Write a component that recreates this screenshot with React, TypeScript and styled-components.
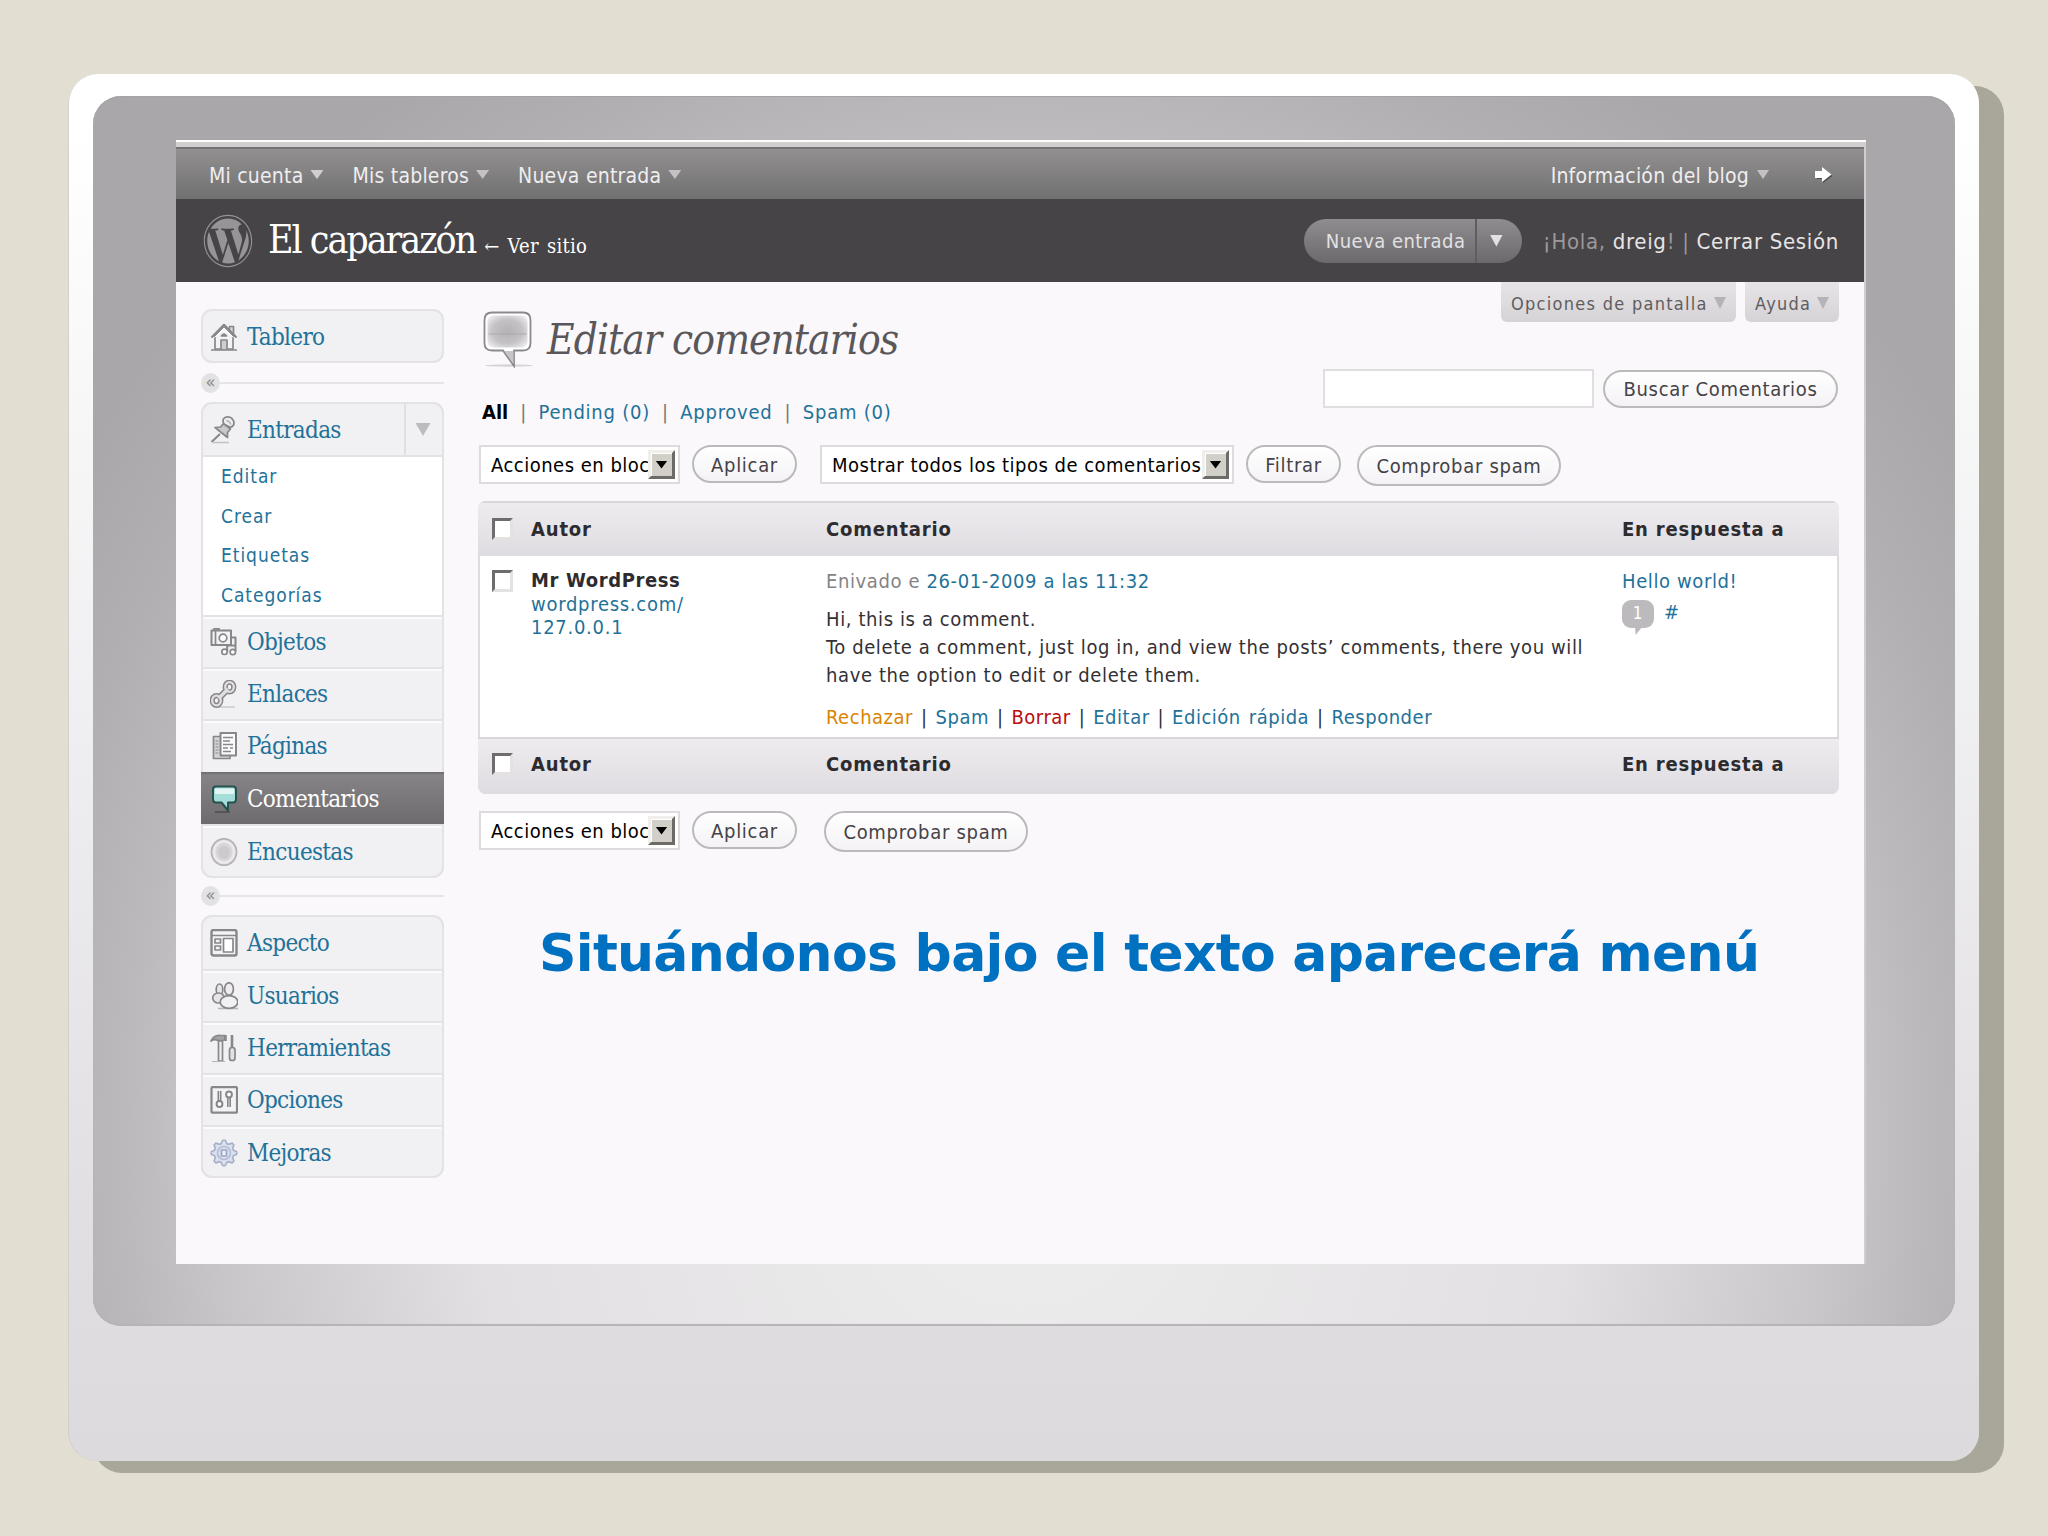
import React from "react";
import styled, { createGlobalStyle, css } from "styled-components";
import { FaWordpress } from "react-icons/fa";

const sans = `"DejaVu Sans Condensed", "DejaVu Sans", sans-serif`;
const serif = `"DejaVu Serif Condensed", "DejaVu Serif", serif`;
const link = "#1f7299";

const GlobalStyle = createGlobalStyle`
  * { box-sizing: border-box; }
  body { margin: 0; background: #e2dfd2; font-family: ${sans}; font-size: 20px; color: #333135; }
`;

/* ---------- frame ---------- */

const Slide = styled.div`
  width: 2048px;
  height: 1536px;
  padding: 74px 0 0 68px;
  overflow: hidden;
  background: #e2dfd2;
`;

const Monitor = styled.div`
  width: 1911px;
  height: 1387px;
  padding: 22px 24px 0 25px;
  border-radius: 29px;
  background: linear-gradient(#ffffff 0%, #ffffff 4%, #f0eff1 45%, #e0dee1 85%, #dcdadd 100%);
  box-shadow: 25px 12px 0 #a9a799, inset 1px 0 0 #d3cfcc;
`;

const Bezel = styled.div`
  height: 1230px;
  padding: 44px 89px 0 83px;
  border-radius: 28px;
  background: radial-gradient(ellipse 1000px 1130px at 50% 85%, #efeeef 0%, #e2e0e2 55%, #c9c7ca 80%, #bbb9bc 90%, #b1afb2 100%, #a9a7aa 112%);
  box-shadow: inset 0 -2px 1px #b5b3b6, inset 0 1px 0 #a5a3a6;
`;

const Screen = styled.div`
  width: 1690px;
  height: 1124px;
`;

const Edge = styled.div`
  height: 7px;
  background: #d2cfce;
  border-top: 2px solid #fff;
`;

const Page = styled.div`
  width: 1688px;
  height: 1117px;
  background: #faf8fb;
  box-shadow: 2px 0 0 #cfcdd0;
`;

/* ---------- top bars ---------- */

const TopBar = styled.nav`
  display: flex;
  align-items: center;
  height: 52px;
  padding: 3px 31px 0 33px;
  border-top: 2px solid #757375;
  background: linear-gradient(#929091, #717071);
  color: #efeeef;
  font-size: 21px;
  letter-spacing: 0.22px;
`;

const TopItem = styled.span<{ $push?: boolean }>`
  display: flex;
  align-items: center;
  gap: 7px;
  margin-right: 29px;
  i { margin-top: -2px; }
  ${(p) => p.$push && css`gap: 8px; margin-left: auto; margin-right: 46px;`}
`;

const Caret = styled.i<{ $w: number; $h: number; $c: string }>`
  display: block;
  flex: none;
  width: ${(p) => p.$w}px;
  height: ${(p) => p.$h}px;
  background: ${(p) => p.$c};
  clip-path: polygon(0 0, 100% 0, 50% 100%);
`;

const PillCaret = styled(Caret)`
  margin-left: 13px;
`;

const Header = styled.header`
  display: flex;
  align-items: center;
  height: 83px;
  padding: 0 25px 0 27px;
  background: #464446;
`;

const Logo = styled(FaWordpress)`
  flex: none;
  width: 50px;
  height: 54px;
  color: #969496;
`;

const SiteTitle = styled.h1`
  margin: 4px 0 0 15px;
  font: 39px/79px ${serif};
  letter-spacing: -2.05px;
  color: #fff;
  white-space: nowrap;
`;

const ViewSite = styled.span`
  margin-left: 9px;
  font-size: 20px;
  letter-spacing: 0.3px;
  word-spacing: 2px;
`;

const Pill = styled.div`
  display: flex;
  align-items: center;
  width: 218px;
  height: 44px;
  margin: 0 21px 0 auto;
  border-radius: 22px;
  background: linear-gradient(#8f8d8f, #6b696c);
  color: #e3e1e3;
  font-size: 20px;
  letter-spacing: 0.45px;
`;

const PillLabel = styled.span`
  width: 173px;
  height: 44px;
  padding-left: 22px;
  line-height: 44px;
  border-right: 2px solid #5f5d60;
`;

const Greeting = styled.span`
  padding-top: 2px;
  color: #9b999b;
  font-size: 22px;
  letter-spacing: 0.68px;
  white-space: nowrap;
  b { font-weight: normal; color: #e6e4e6; }
`;

/* ---------- sidebar ---------- */

const Body = styled.div`
  display: flex;
  padding-left: 25px;
`;

const Sidebar = styled.aside`
  width: 243px;
  padding-top: 27px;
`;

const Group = styled.ul`
  margin: 0;
  padding: 0;
  overflow: hidden;
  list-style: none;
  border-radius: 11px;
  background: #f1f0f2;
  box-shadow: inset 0 0 0 2px #e3e2e4;
`;

const Item = styled.li<{ $h: number; $active?: boolean; $first?: boolean }>`
  display: flex;
  align-items: center;
  height: ${(p) => p.$h}px;
  padding: 2px 0 0 9px;
  font: 24px ${serif};
  letter-spacing: -0.7px;
  color: ${link};
  ${(p) => !p.$first && !p.$active && css`
    border: 2px solid #e3e2e4;
    border-bottom: 0;
    box-shadow: inset 0 2px 0 #fbfafc;
    padding: 0 0 0 7px;
  `}
  ${(p) => p.$active && css`
    color: #fff;
    background: linear-gradient(#6c6a6d, #858386 6%, #6d6b6e);
  `}
`;

const IconCell = styled.span`
  display: flex;
  width: 37px;
  flex: none;
`;

const Toggle = styled.span`
  display: flex;
  align-items: center;
  justify-content: center;
  width: 40px;
  height: 100%;
  margin-left: auto;
  padding-right: 4px;
  border-left: 2px solid #e0dfe1;
`;

const SubMenu = styled.li`
  height: 160px;
  margin: 0 2px;
  padding-left: 18px;
  border-top: 2px solid #e3e2e4;
  background: #fff;
  color: ${link};
  font-size: 19px;
  letter-spacing: 0.95px;
  line-height: 38px;
  div { height: 39.7px; }
`;

const Divider = styled.div<{ $h: number }>`
  display: flex;
  align-items: center;
  height: ${(p) => p.$h}px;
  &::after { content: ""; flex: 1; height: 2px; background: #e5e4e6; }
`;

const Dot = styled.span`
  width: 19px;
  height: 20px;
  border-radius: 50%;
  background: #e2e1e3;
  color: #8d8b8e;
  font-size: 18px;
  line-height: 17px;
  text-align: center;
`;

/* ---------- main ---------- */

const Main = styled.main`
  width: 1361px;
  margin-left: 34px;
`;

const Intro = styled.div`
  display: flex;
  justify-content: space-between;
  height: 163px;
`;

const TitleRow = styled.div`
  display: flex;
  align-items: center;
  height: 57px;
  margin: 29px 0 0 5px;
`;

const Title = styled.h2`
  margin: 0 0 0 14px;
  font: italic 42px/57px ${serif};
  letter-spacing: -0.93px;
  color: #59575a;
  white-space: nowrap;
`;

const Filters = styled.div`
  margin: 32px 0 0 4px;
  line-height: 24px;
  letter-spacing: 0.75px;
  color: ${link};
  b { color: #000; letter-spacing: 0; }
  i { font-style: normal; color: #777; margin: 0 11.5px 0 12px; }
`;

const Side = styled.div`
  display: flex;
  flex-direction: column;
  align-items: flex-end;
`;

const Tabs = styled.div`
  display: flex;
  gap: 9px;
`;

const Tab = styled.div<{ $w: number }>`
  display: flex;
  align-items: center;
  justify-content: space-between;
  width: ${(p) => p.$w}px;
  height: 40px;
  padding: 2px 10px 0 10px;
  border-radius: 0 0 6px 6px;
  background: linear-gradient(#e6e4e7, #d5d3d6);
  color: #5f5d60;
  font-size: 18px;
  letter-spacing: 1.28px;
  white-space: nowrap;
`;

const Search = styled.div`
  display: flex;
  align-items: center;
  gap: 9px;
  margin: 47px 1px 0 0;
`;

const SearchField = styled.div`
  width: 271px;
  height: 39px;
  border: 2px solid #e0dee1;
  background: #fff;
`;

const Button = styled.div<{ $w: number; $h?: number; $ml?: number }>`
  display: flex;
  flex: none;
  align-items: center;
  justify-content: center;
  width: ${(p) => p.$w}px;
  height: ${(p) => p.$h ?? 38}px;
  margin-left: ${(p) => p.$ml ?? 0}px;
  padding-top: 1px;
  border: 2px solid #bbb9bc;
  border-radius: 22px;
  background: linear-gradient(#ffffff, #f4f2f5);
  color: #454347;
  letter-spacing: 0.7px;
  white-space: nowrap;
`;

const Toolbar = styled.div`
  display: flex;
  align-items: flex-start;
  padding-left: 1px;
`;

const SelectBox = styled.div<{ $w: number; $ml?: number }>`
  display: flex;
  flex: none;
  align-items: center;
  width: ${(p) => p.$w}px;
  height: 39px;
  margin-left: ${(p) => p.$ml ?? 0}px;
  padding: 0 3px 0 10px;
  border: 2px solid #dddbde;
  background: #fff;
  color: #000;
  letter-spacing: 0.49px;
`;

const SelectText = styled.span`
  flex: 1;
  width: 0;
  white-space: nowrap;
`;

const SelectArrow = styled.span`
  display: flex;
  flex: none;
  align-items: center;
  justify-content: center;
  position: relative;
  width: 27px;
  height: 29px;
  border: 3px solid;
  border-color: #f0efec #6d6b68 #6d6b68 #f0efec;
  background: #d2cfc8;
  box-shadow: inset 1px 1px 0 #fff;
`;

const Table = styled.section`
  margin: 15px 0 17px;
  border-radius: 8px;
  overflow: hidden;
  background: #fff;
  box-shadow: inset 0 0 0 2px #dddbde;
`;

const columns = css`
  display: grid;
  grid-template-columns: 53px 295px 796px 1fr;
`;

const Band = styled.div<{ $h: number; $foot?: boolean }>`
  ${columns}
  align-items: center;
  height: ${(p) => p.$h}px;
  padding: ${(p) => (p.$foot ? "0 0 6px" : "0 0 2px")};
  background: linear-gradient(#eeecef, #dedce0);
  border-top: 2px solid #d8d6d9;
  color: #2d2b2e;
  font-weight: bold;
  letter-spacing: 0.82px;
`;

const Record = styled.div`
  ${columns}
  height: 181px;
  padding-top: 13px;
  line-height: 24px;
  letter-spacing: 0.61px;
`;

const Check = styled.span`
  display: block;
  width: 21px;
  height: 22px;
  margin: 1px 0 0 14px;
  border: 3px solid;
  border-color: #6e6c6f #e4e2e0 #e4e2e0 #6e6c6f;
  background: #fff;
`;

const Author = styled.div`
  color: ${link};
  line-height: 23.7px;
  letter-spacing: 0.72px;
  b { color: #2d2b2e; letter-spacing: 0.62px; }
`;

const Muted = styled.span`color: #858386;`;
const Link = styled.span<{ $c?: string }>`color: ${(p) => p.$c ?? link};`;

const Quote = styled.p`
  margin: 12px 0 16px;
  line-height: 28px;
  white-space: nowrap;
`;

const Actions = styled.div`
  letter-spacing: 0.52px;
  word-spacing: 1.7px;
`;

const CountRow = styled.div`
  display: flex;
  gap: 10px;
  margin-top: 7px;
`;

const Count = styled.span`
  position: relative;
  width: 32px;
  height: 28px;
  border-radius: 9px;
  background: #bcbabd;
  color: #fff;
  font-size: 17px;
  line-height: 27px;
  text-align: center;
  &::after {
    content: "";
    position: absolute;
    left: 13px;
    top: 27px;
    width: 7px;
    height: 8px;
    background: #bcbabd;
    clip-path: polygon(0 0, 100% 0, 10% 100%);
  }
`;

const Caption = styled.p`
  margin: 70px 0 0 61px;
  font: bold 52px/62px "DejaVu Sans", sans-serif;
  letter-spacing: -0.7px;
  color: #0070c0;
  white-space: nowrap;
`;

/* ---------- icons ---------- */

const ink = "#88868a";

const Glyph = ({ children, stroke = ink }: { children: React.ReactNode; stroke?: string }) => (
  <svg width="28" height="28" viewBox="0 0 28 28" fill="none" stroke={stroke} strokeWidth="1.7" strokeLinejoin="round">
    {children}
  </svg>
);

const gearPath = (() => {
  const pts: string[] = [];
  for (let i = 0; i < 32; i++) {
    const a = ((i - 0.5) / 32) * Math.PI * 2;
    const r = i % 4 < 2 ? 12.8 : 9.8;
    pts.push(`${(14 + r * Math.cos(a)).toFixed(2)} ${(14 + r * Math.sin(a)).toFixed(2)}`);
  }
  return `M${pts.join("L")}Z`;
})();

const icons: Record<string, React.ReactNode> = {
  home: (
    <Glyph>
      <path d="M5 13v13h18V13L14 4z" fill="#f4f3f4" />
      <path d="M19.5 7V3.5h4V11" fill="#dddbdd" />
      <path d="M1.5 14.5 14 1.8l12.5 12.7" strokeWidth="2.2" />
      <path d="M4.5 14.5 14 5l9.5 9.5" stroke="#fff" strokeWidth="1" />
      <path d="M11 26v-9h6v9" fill="#cfcdd0" />
      <path d="M11.5 13q2.5-4 5 0z" fill={ink} />
      <path d="M1 27h26" />
    </Glyph>
  ),
  pin: (
    <Glyph>
      <path d="M10 18 1.500 26" strokeWidth="2" />
      <path d="M2 26.500h17" stroke="#c4c2c5" />
      <path d="M13.500 7.500 20.500 13 17.500 16.500 17.500 21.500 5 11.500 10.500 11z" fill="#c9c7ca" />
      <path d="M14 8q-2.500-4.500 1-6.500 4-1.500 7 1 3 3.500 1.500 6.500-1.500 2.500-4 2z" fill="#ecebed" />
      <path d="M16.500 4.500q3 .5 4.500 4" stroke="#b0aeb1" strokeWidth="1.300" />
    </Glyph>
  ),
  media: (
    <Glyph>
      <rect x="1.5" y="2.500" width="19.500" height="14.500" fill="#f2f1f3" strokeWidth="2" />
      <path d="M4 2V.8h5V2M5.500 3v13" />
      <circle cx="13" cy="10" r="3.800" fill="#fff" />
      <path d="M17.200 23.500V17M25.500 23.500V9.500H22M17.500 17.500h8" strokeWidth="2" />
      <circle cx="14.500" cy="23.800" r="2.700" fill="#fff" />
      <circle cx="22.800" cy="24" r="2.700" fill="#fff" />
    </Glyph>
  ),
  link: (
    <Glyph>
      <path d="M8 27h17" stroke="#d0ced1" />
      <ellipse cx="6.500" cy="20.500" rx="4.300" ry="4.800" strokeWidth="5.200" />
      <ellipse cx="19.500" cy="7" rx="4.300" ry="4.800" strokeWidth="5.200" />
      <path d="M9 18 17.500 9.500" strokeWidth="6.500" />
      <ellipse cx="6.500" cy="20.500" rx="4.300" ry="4.800" stroke="#e0dee1" strokeWidth="2.300" />
      <ellipse cx="19.500" cy="7" rx="4.300" ry="4.800" stroke="#e0dee1" strokeWidth="2.300" />
      <path d="M8.500 18.500 18 9" stroke="#e0dee1" strokeWidth="3.200" />
    </Glyph>
  ),
  pages: (
    <Glyph>
      <path d="M10 4.500H3.500v22H20V24" fill="#d6d4d7" />
      <path d="M5.500 9h3M5.500 12h3M5.500 15h3M5.500 18h3M5.500 21h3" strokeWidth="1.200" />
      <rect x="10.500" y="1" width="15.500" height="22.500" fill="#fafafa" strokeWidth="2" />
      <path d="M13 5.500h10M13 9h7M13 12.500h10M13 16h5M20 16h3M13 19.500h8" strokeWidth="1.300" />
    </Glyph>
  ),
  comments: (
    <Glyph stroke="#27514e">
      <path d="M5 27h15" stroke="#4d4b4e" />
      <path d="M6 1.500h17q3 0 3 3V14q0 3.500-3 3.500h-5v8l-6.500-8H6q-3 0-3-3.500V4.500q0-3 3-3z" fill="#a5ddd8" strokeWidth="2" />
      <path d="M5 3.500h19V9H5z" fill="#e2f5f3" stroke="none" />
    </Glyph>
  ),
  polls: (
    <Glyph stroke="#b3b1b4">
      <ellipse cx="14" cy="14" rx="12.500" ry="13.200" fill="#e8e6e8" />
      <ellipse cx="14" cy="14" rx="9.500" ry="10.200" fill="#d8d6d9" stroke="#eceaec" />
      <ellipse cx="14" cy="14.500" rx="6" ry="6.500" fill="#cccacd" stroke="none" />
    </Glyph>
  ),
  theme: (
    <Glyph>
      <rect x="1.500" y="1" width="25" height="25.500" rx="2" fill="#f4f3f4" strokeWidth="2.400" />
      <path d="M2 6.500h24" />
      <rect x="5" y="10" width="5.500" height="4" />
      <rect x="5" y="17" width="5.500" height="4" />
      <rect x="13.500" y="9.500" width="9.500" height="13.500" fill="#fff" />
    </Glyph>
  ),
  users: (
    <Glyph>
      <ellipse cx="9.500" cy="7.500" rx="3.300" ry="5.500" fill="#e7e5e8" />
      <ellipse cx="8.500" cy="16" rx="5.800" ry="5" fill="#e7e5e8" />
      <path d="M8 26.500h20" stroke="#b5b3b6" />
      <ellipse cx="19" cy="7" rx="4.400" ry="6.200" fill="#eeecef" />
      <ellipse cx="19" cy="20" rx="8.800" ry="6.300" fill="#f1f0f2" />
    </Glyph>
  ),
  tools: (
    <Glyph>
      <path d="M1 7q3-6 9-5.500h5V6l-3 .5H8Q4 4.500 1 7z" fill="#a5a3a6" />
      <path d="M15.500 1v6" strokeWidth="2.500" />
      <path d="M8.500 7h4v20h-4z" fill="#f0eef0" />
      <path d="M22 1v13" strokeWidth="2.600" />
      <rect x="19.500" y="13.500" width="5.500" height="13" rx="2.500" fill="#e2e0e3" />
      <path d="M2 27.500h13" stroke="#b5b3b6" strokeWidth="1" />
    </Glyph>
  ),
  options: (
    <Glyph>
      <rect x="1.500" y="1.200" width="25.500" height="25.500" rx="1" fill="#f4f3f4" strokeWidth="2.200" />
      <path d="M9.500 5v10M19 12v9" strokeWidth="4" />
      <path d="M9.500 5v10M19 12v9" stroke="#d8d6d9" strokeWidth="1" />
      <circle cx="9.500" cy="18" r="2.900" fill="#fff" strokeWidth="2" />
      <circle cx="19" cy="8.500" r="2.900" fill="#fff" strokeWidth="2" />
    </Glyph>
  ),
  gear: (
    <Glyph stroke="#a9b2cb">
      <path d={gearPath} fill="#dce1ef" />
      <circle cx="14" cy="14" r="6.500" stroke="#b4bdd6" />
      <rect x="11.500" y="11" width="5" height="6" fill="#eef1f9" stroke="#9aa6c6" />
    </Glyph>
  ),
};

const BigBubble = () => (
  <svg width="50" height="57" viewBox="0 0 50 57" fill="none">
    <defs>
      <radialGradient id="bubbleFill" cx="50%" cy="50%" r="68%">
        <stop offset="0" stopColor="#b4b2b4" />
        <stop offset="0.55" stopColor="#c4c2c4" />
        <stop offset="0.85" stopColor="#e4e2e4" />
        <stop offset="1" stopColor="#fafafa" />
      </radialGradient>
    </defs>
    <ellipse cx="26" cy="54.500" rx="24" ry="1.200" fill="#d5d3d6" />
    <path d="M9 1.500h31q7.500 0 7.500 7.500v23q0 7.500-7.500 7.500H31V55L20 39.500H9Q1.500 39.500 1.500 32V9Q1.500 1.500 9 1.500z" fill="#fff" stroke="#8b898c" strokeWidth="1.800" />
    <rect x="4.500" y="4.500" width="40" height="32" rx="5" fill="url(#bubbleFill)" />
    <rect x="5.500" y="22" width="38" height="2" fill="#a9a7aa" opacity="0.450" />
    <path d="M22 40 30.500 53V40z" fill="#c6c4c7" />
  </svg>
);

const ExitArrow = () => (
  <svg width="18" height="17" viewBox="0 0 18 17">
    <path d="M2 6h6V2l9.500 7L8 16v-4H2z" fill="#4f4d50" />
    <path d="M0 4h7V0l9.500 7.500L7 15v-4H0z" fill="#fff" />
  </svg>
);

/* ---------- composition ---------- */

const MenuItem = ({ icon, label, h = 52.2, active, first, toggle }: {
  icon: string; label: string; h?: number; active?: boolean; first?: boolean; toggle?: boolean;
}) => (
  <Item $h={h} $active={active} $first={first}>
    <IconCell>{icons[icon]}</IconCell>
    {label}
    {toggle && <Toggle><Caret $w={15} $h={13} $c="#bdbbbe" /></Toggle>}
  </Item>
);

const Select = ({ label, w, ml }: { label: string; w: number; ml?: number }) => (
  <SelectBox $w={w} $ml={ml}>
    <SelectText>{label}</SelectText>
    <SelectArrow><Caret $w={12} $h={8} $c="#000" /></SelectArrow>
  </SelectBox>
);

const Headings = ({ h, foot }: { h: number; foot?: boolean }) => (
  <Band $h={h} $foot={foot}>
    <Check />
    <span>Autor</span>
    <span>Comentario</span>
    <span>En respuesta a</span>
  </Band>
);

export default function App() {
  return (
    <Slide>
      <GlobalStyle />
      <Monitor>
        <Bezel>
          <Screen>
            <Edge />
            <Page>
              <TopBar>
                <TopItem>Mi cuenta<Caret $w={13} $h={9} $c="#d0ced0" /></TopItem>
                <TopItem>Mis tableros<Caret $w={13} $h={9} $c="#c4c2c4" /></TopItem>
                <TopItem>Nueva entrada<Caret $w={13} $h={9} $c="#c4c2c4" /></TopItem>
                <TopItem $push>Información del blog<Caret $w={12} $h={9} $c="#c4c2c4" /></TopItem>
                <ExitArrow />
              </TopBar>
              <Header>
                <Logo preserveAspectRatio="none" />
                <SiteTitle>El caparazón<ViewSite>← Ver sitio</ViewSite></SiteTitle>
                <Pill>
                  <PillLabel>Nueva entrada</PillLabel>
                  <PillCaret $w={13} $h={12} $c="#e3e1e3" />
                </Pill>
                <Greeting>¡Hola, <b>dreig</b>! | <b>Cerrar Sesión</b></Greeting>
              </Header>
              <Body>
                <Sidebar>
                  <Group><MenuItem icon="home" label="Tablero" h={54} first /></Group>
                  <Divider $h={39}><Dot>«</Dot></Divider>
                  <Group>
                    <MenuItem icon="pin" label="Entradas" h={53} first toggle />
                    <SubMenu>
                      <div>Editar</div>
                      <div>Crear</div>
                      <div>Etiquetas</div>
                      <div>Categorías</div>
                    </SubMenu>
                    <MenuItem icon="media" label="Objetos" />
                    <MenuItem icon="link" label="Enlaces" />
                    <MenuItem icon="pages" label="Páginas" />
                    <MenuItem icon="comments" label="Comentarios" active />
                    <MenuItem icon="polls" label="Encuestas" h={54} />
                  </Group>
                  <Divider $h={37}><Dot>«</Dot></Divider>
                  <Group>
                    <MenuItem icon="theme" label="Aspecto" h={54} first />
                    <MenuItem icon="users" label="Usuarios" />
                    <MenuItem icon="tools" label="Herramientas" />
                    <MenuItem icon="options" label="Opciones" />
                    <MenuItem icon="gear" label="Mejoras" h={53} />
                  </Group>
                </Sidebar>
                <Main>
                  <Intro>
                    <div>
                      <TitleRow><BigBubble /><Title>Editar comentarios</Title></TitleRow>
                      <Filters>
                        <b>All</b><i>|</i>Pending (0)<i>|</i>Approved<i>|</i>Spam (0)
                      </Filters>
                    </div>
                    <Side>
                      <Tabs>
                        <Tab $w={235}>Opciones de pantalla<Caret $w={12} $h={12} $c="#b5b3b6" /></Tab>
                        <Tab $w={94}>Ayuda<Caret $w={12} $h={12} $c="#b5b3b6" /></Tab>
                      </Tabs>
                      <Search><SearchField /><Button $w={235}>Buscar Comentarios</Button></Search>
                    </Side>
                  </Intro>
                  <Toolbar>
                    <Select label="Acciones en bloc" w={201} />
                    <Button $w={105} $ml={12}>Aplicar</Button>
                    <Select label="Mostrar todos los tipos de comentarios" w={414} ml={23} />
                    <Button $w={95} $ml={12}>Filtrar</Button>
                    <Button $w={204} $h={41} $ml={16}>Comprobar spam</Button>
                  </Toolbar>
                  <Table>
                    <Headings h={55} />
                    <Record>
                      <Check />
                      <Author><b>Mr WordPress</b><br />wordpress.com/<br />127.0.0.1</Author>
                      <div>
                        <Muted>Enivado e</Muted> <Link>26-01-2009 a las 11:32</Link>
                        <Quote>
                          Hi, this is a comment.<br />
                          To delete a comment, just log in, and view the posts’ comments, there you will<br />
                          have the option to edit or delete them.
                        </Quote>
                        <Actions>
                          <Link $c="#d98500">Rechazar</Link> | <Link>Spam</Link> | <Link $c="#bc0b0b">Borrar</Link> | <Link>Editar</Link> | <Link>Edición rápida</Link> | <Link>Responder</Link>
                        </Actions>
                      </div>
                      <div>
                        <Link>Hello world!</Link>
                        <CountRow><Count>1</Count><Link>#</Link></CountRow>
                      </div>
                    </Record>
                    <Headings h={57} foot />
                  </Table>
                  <Toolbar>
                    <Select label="Acciones en bloc" w={201} />
                    <Button $w={105} $ml={12}>Aplicar</Button>
                    <Button $w={204} $h={41} $ml={27}>Comprobar spam</Button>
                  </Toolbar>
                  <Caption>Situándonos bajo el texto aparecerá menú</Caption>
                </Main>
              </Body>
            </Page>
          </Screen>
        </Bezel>
      </Monitor>
    </Slide>
  );
}
